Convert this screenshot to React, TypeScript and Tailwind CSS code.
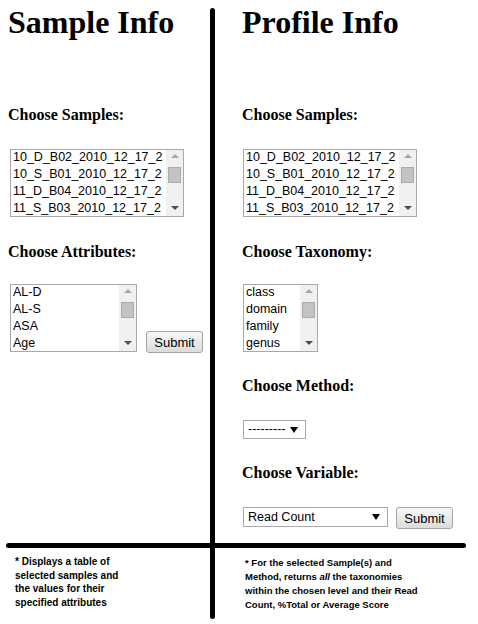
const sampleNames = [
  '10_D_B02_2010_12_17_2',
  '10_S_B01_2010_12_17_2',
  '11_D_B04_2010_12_17_2',
  '11_S_B03_2010_12_17_2',
];
const attributes = ['AL-D', 'AL-S', 'ASA', 'Age'];
const taxonomy = ['class', 'domain', 'family', 'genus'];

const serif = "font-['Liberation_Serif',serif]";
const sans = "font-['Liberation_Sans',Arial,sans-serif]";

function Heading({ children, className = '' }: { children: React.ReactNode; className?: string }) {
  return <h3 className={`${serif} text-[16px] leading-[16px] font-bold text-black ${className}`}>{children}</h3>;
}

function ListBox({ items, width }: { items: string[]; width: string }) {
  return (
    <div className={`${width} h-[68px] flex border border-[#a9a9a9] bg-white overflow-hidden`}>
      <div className={`flex-1 min-w-0 overflow-hidden pl-[2px] ${sans} text-[12.5px] text-black`}>
        {items.map((it) => (
          <div key={it} className="h-[17px] leading-[15px] whitespace-nowrap">
            {it}
          </div>
        ))}
      </div>
      <div className="w-[17px] shrink-0 bg-[#f0f0f0] flex flex-col items-center">
        <div className="h-[12px] flex items-center justify-center">
          <div className="w-0 h-0 border-x-[4px] border-x-transparent border-b-[4px] border-b-[#a6a6a6]" />
        </div>
        <div className="mt-[5px] h-[16px] w-[13px] bg-[#c3c3c3] border border-[#acacac]" />
        <div className="flex-1" />
        <div className="h-[16px] flex items-center justify-center">
          <div className="w-0 h-0 border-x-[4px] border-x-transparent border-t-[4px] border-t-[#4d4d4d]" />
        </div>
      </div>
    </div>
  );
}

function Dropdown({ label, width, height }: { label: string; width: string; height: string }) {
  return (
    <div className={`${width} ${height} flex items-center border border-[#a9a9a9] bg-white pl-[4px] pr-[7px] ${sans} text-[12.5px] text-black`}>
      <span className="flex-1 leading-none">{label}</span>
      <div className="w-0 h-0 border-x-[4px] border-x-transparent border-t-[6px] border-t-black" />
    </div>
  );
}

function SubmitButton({ className = '' }: { className?: string }) {
  return (
    <button
      type="button"
      className={`w-[57px] h-[22px] rounded-[3px] border border-[#a3a3a3] bg-gradient-to-b from-[#f7f7f7] to-[#dcdcdc] ${sans} text-[13px] leading-none text-black ${className}`}
    >
      Submit
    </button>
  );
}

export default function App() {
  return (
    <div className="w-[478px] h-[624px] bg-white grid grid-cols-[210px_5px_1fr] grid-rows-[543px_5px_76px] overflow-hidden">
      {/* left column */}
      <div className="col-start-1 row-start-1 pl-[8px] flex flex-col items-start">
        <h1 className={`${serif} mt-[6px] text-[32px] leading-[32px] font-bold text-black whitespace-nowrap`}>Sample Info</h1>
        <Heading className="mt-[69px]">Choose Samples:</Heading>
        <div className="mt-[26px] ml-[2px]">
          <ListBox items={sampleNames} width="w-[174px]" />
        </div>
        <Heading className="mt-[27px]">Choose Attributes:</Heading>
        <div className="mt-[24px] ml-[2px] flex items-end gap-[9px]">
          <ListBox items={attributes} width="w-[127px]" />
          <SubmitButton className="-mb-[1px] h-[21px] w-[56px]" />
        </div>
      </div>

      {/* divider lines */}
      <div className="col-start-2 row-start-1 row-span-3 self-start mt-[8px] h-[611px] w-[5px] bg-black rounded-full" />
      <div className="col-start-1 col-span-3 row-start-2 ml-[6px] w-[460px] h-[5px] bg-black rounded-full" />

      {/* right column */}
      <div className="col-start-3 row-start-1 pl-[27px] flex flex-col items-start">
        <h1 className={`${serif} mt-[6px] text-[32px] leading-[32px] font-bold text-black whitespace-nowrap`}>Profile Info</h1>
        <Heading className="mt-[69px]">Choose Samples:</Heading>
        <div className="mt-[26px] ml-[1px]">
          <ListBox items={sampleNames} width="w-[174px]" />
        </div>
        <Heading className="mt-[27px]">Choose Taxonomy:</Heading>
        <div className="mt-[24px] ml-[1px]">
          <ListBox items={taxonomy} width="w-[75px]" />
        </div>
        <Heading className="mt-[26px]">Choose Method:</Heading>
        <div className="mt-[26px] ml-[1px]">
          <Dropdown label="---------" width="w-[63px]" height="h-[19px]" />
        </div>
        <Heading className="mt-[26px]">Choose Variable:</Heading>
        <div className="mt-[26px] ml-[1px] flex items-start gap-[8px]">
          <Dropdown label="Read Count" width="w-[145px]" height="h-[20px]" />
          <SubmitButton />
        </div>
      </div>

      {/* footnotes */}
      <div className={`col-start-1 row-start-3 pl-[15px] pt-[7px] ${sans} text-[10px] leading-[13.5px] font-bold text-black`}>
        * Displays a table of<br />
        selected samples and<br />
        the values for their<br />
        specified attributes
      </div>
      <div className={`col-start-3 row-start-3 pl-[30px] pt-[8px] ${sans} text-[9.5px] leading-[14px] font-bold text-black`}>
        * For the selected Sample(s) and<br />
        Method, returns <i>all</i> the taxonomies<br />
        within the chosen level and their Read<br />
        Count, %Total or Average Score
      </div>
    </div>
  );
}
